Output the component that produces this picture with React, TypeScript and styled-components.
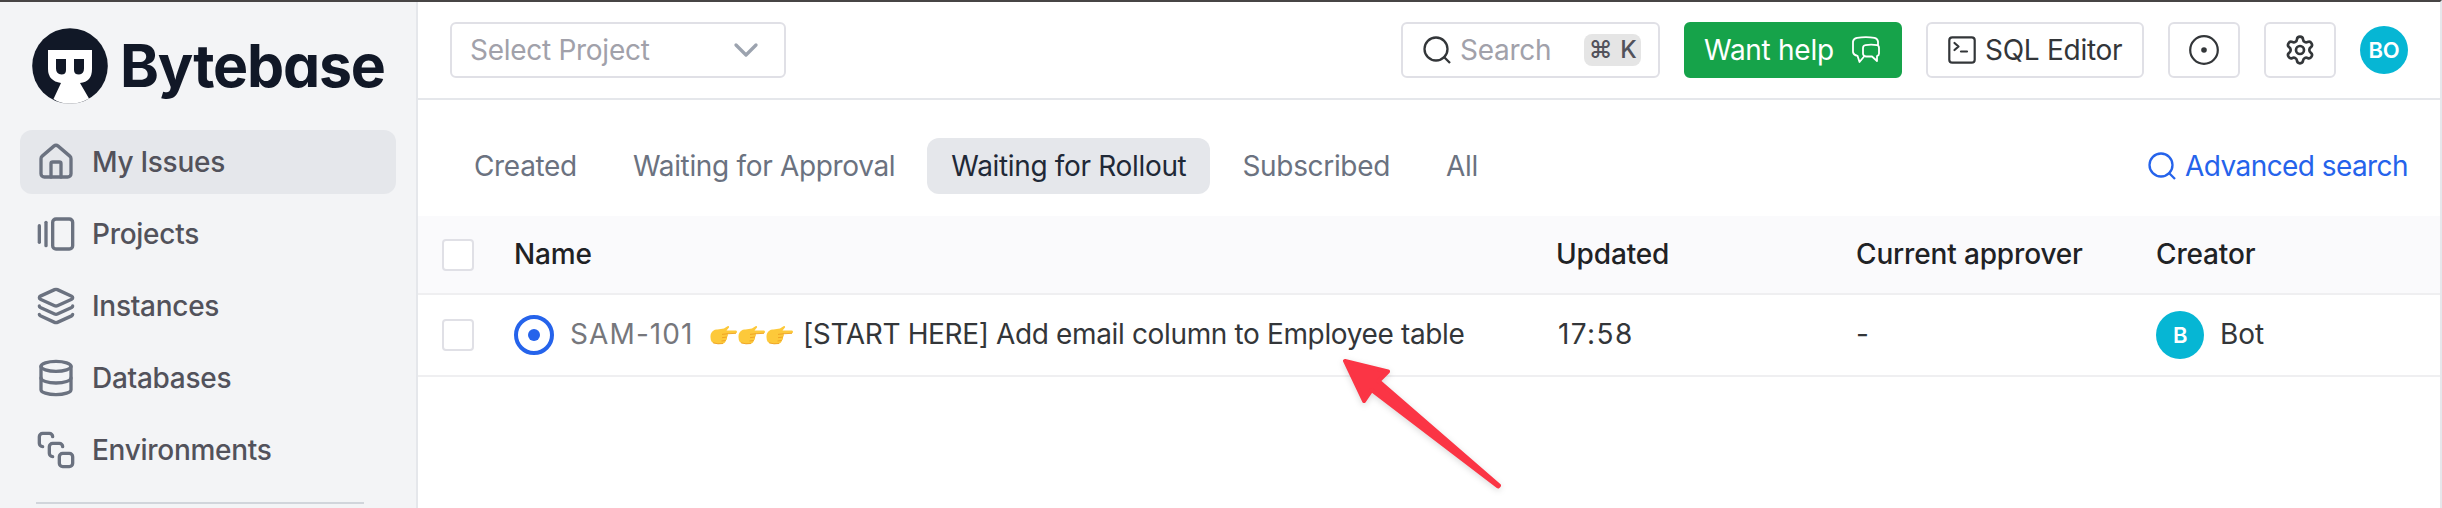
import React from "react";
import styled, { createGlobalStyle } from "styled-components";
import {
  Home,
  GalleryHorizontalEnd,
  Layers,
  Database,
  SquareStack,
  ChevronDown,
  Settings,
  type LucideIcon,
} from "lucide-react";

const GlobalStyle = createGlobalStyle`
  *, *::before, *::after { box-sizing: border-box; }
  body {
    margin: 0;
    background: #fff;
    font-family: Inter, "Liberation Sans", sans-serif;
    font-size: 28px;
    line-height: 40px;
    letter-spacing: -0.28px;
    color: #333639;
  }
`;

const Page = styled.div`
  display: flex;
  width: 2442px;
  height: 508px;
  overflow: hidden;
  border-top: 2px solid #474545;
  border-right: 2px solid #e5e7eb;
`;

const Sidebar = styled.aside`
  flex: none;
  width: 418px;
  padding: 26px 20px 0;
  background: #f3f4f6;
  border-right: 2px solid #e5e7eb;
`;

const Brand = styled.div`
  display: flex;
  align-items: center;
  height: 76px;
  padding-left: 12px;
  margin-bottom: 26px;
  color: #111827;
`;

const BrandName = styled.span`
  margin-left: 12px;
  font-weight: 700;
  font-size: 59px;
  line-height: 76px;
  letter-spacing: -1.2px;
  font-feature-settings: "cv11";
`;

const NavItem = styled.a<{ $active?: boolean }>`
  display: flex;
  align-items: center;
  gap: 16px;
  height: 64px;
  margin-bottom: 8px;
  padding: 0 16px;
  border-radius: 12px;
  font-weight: 500;
  color: #52525b;
  background: ${(p) => (p.$active ? "#e5e7eb" : "transparent")};
  svg { color: #6b7280; flex: none; }
`;

const SidebarRule = styled.hr`
  margin: 20px 32px 0 16px;
  border: 0;
  height: 2px;
  background: #d1d5db;
`;

const Main = styled.main`
  display: flex;
  flex-direction: column;
  flex: 1;
  min-width: 0;
`;

const Header = styled.header`
  display: flex;
  align-items: center;
  gap: 24px;
  height: 98px;
  padding: 0 32px;
  border-bottom: 2px solid #e5e7eb;
`;

const Spacer = styled.div`
  flex: 1;
`;

const Control = styled.div<{ $width: number; $pad?: string }>`
  display: flex;
  align-items: center;
  gap: 9px;
  flex: none;
  width: ${(p) => p.$width}px;
  height: 56px;
  padding: ${(p) => p.$pad ?? "0 20px"};
  border: 2px solid #e0e0e6;
  border-radius: 6px;
  white-space: nowrap;
  svg { flex: none; }
`;

const HelpButton = styled(Control)`
  justify-content: space-between;
  border-color: #16a34a;
  background: #16a34a;
  color: #fff;
`;

const IconButton = styled(Control)`
  justify-content: center;
`;

const Placeholder = styled.span`
  flex: 1;
  color: #a1a1aa;
`;

const Shortcut = styled.kbd`
  display: flex;
  align-items: center;
  justify-content: center;
  gap: 8px;
  width: 57px;
  height: 32px;
  border-radius: 8px;
  background: #e5e5e5;
  color: #52525b;
  font: 500 24px/32px Inter, sans-serif;
`;

const Avatar = styled.span`
  display: flex;
  align-items: center;
  justify-content: center;
  flex: none;
  width: 48px;
  height: 48px;
  border-radius: 50%;
  background: #06b6d4;
  color: #fff;
  font-weight: 600;
  font-size: 22px;
`;

const TabBar = styled.nav`
  display: flex;
  align-items: center;
  height: 116px;
  padding: 16px 32px 0;
`;

const Tab = styled.a<{ $active?: boolean }>`
  height: 56px;
  margin-right: 8px;
  padding: 0 24px;
  border-radius: 12px;
  line-height: 56px;
  letter-spacing: -0.33px;
  white-space: nowrap;
  color: ${(p) => (p.$active ? "#1f2937" : "#6b7280")};
  background: ${(p) => (p.$active ? "#e5e7eb" : "transparent")};
`;

const SearchLink = styled.a`
  display: flex;
  align-items: center;
  gap: 9px;
  letter-spacing: -0.57px;
  color: #2563eb;
`;

const TableRow = styled.div<{ $head?: boolean }>`
  display: grid;
  grid-template-columns: 96px 1042px 300px 300px 1fr;
  align-items: center;
  height: ${(p) => (p.$head ? 79 : 82)}px;
  border-bottom: 2px solid #efeff1;
  background: ${(p) => (p.$head ? "#fafafc" : "#fff")};
  color: ${(p) => (p.$head ? "#1f2225" : "#333639")};
  font-weight: ${(p) => (p.$head ? 500 : 400)};
  letter-spacing: ${(p) => (p.$head ? -0.15 : -0.36)}px;
  line-height: 38px;
`;

const Cell = styled.div`
  display: flex;
  align-items: center;
  white-space: nowrap;
`;

const CellText = styled.span`
  padding-bottom: 2px;
`;

const Checkbox = styled.span`
  width: 32px;
  height: 32px;
  margin-left: 24px;
  border: 2px solid #e0e0e6;
  border-radius: 4px;
  background: #fff;
`;

const StatusDot = styled.span`
  display: flex;
  align-items: center;
  justify-content: center;
  width: 40px;
  height: 40px;
  margin-right: 16px;
  border: 4px solid #2563eb;
  border-radius: 50%;
  &::after {
    content: "";
    width: 12px;
    height: 12px;
    border-radius: 50%;
    background: #2563eb;
  }
`;

const IssueKey = styled(CellText)`
  width: 140px;
  letter-spacing: 1.1px;
  color: #76777c;
`;

const Timestamp = styled(CellText)`
  padding-left: 2px;
  letter-spacing: 1.4px;
`;

const Hands = styled.span`
  display: flex;
  margin-right: 9px;
`;

const CreatorName = styled(CellText)`
  margin-left: 16px;
  letter-spacing: 0;
`;

const Pointer = styled.svg`
  position: absolute;
  left: 1330px;
  top: 350px;
  filter: drop-shadow(0 2px 3px rgba(0, 0, 0, 0.15));
`;

const BytebaseMark = () => (
  <svg width="76" height="76" viewBox="0 0 76 76">
    <circle cx="38" cy="38" r="37.8" fill="#111827" />
    <path
      fill="#fff"
      d="M16 22H60V41Q60 54 48 55L57 70.5Q48 75.8 38 75.8T21.500 71L29 55Q16 53 16 41Z"
    />
    <path
      fill="#111827"
      d="M24 31H34V42Q34 46.500 29.500 46.500Q24 46 24 40.500ZM42 31H52V40.500Q52 46 47 46.500Q42 46.500 42 42Z"
    />
  </svg>
);

const HelpIcon = () => (
  <svg width="28" height="28" viewBox="0 0 28 28" fill="none" stroke="currentColor" strokeWidth="1.800" strokeLinejoin="round">
    <path d="M26 9V5.500Q25.500 2.500 22.500 1.800Q14 .6 5 1.800Q1.500 2.500 1 5.500V16Q1.500 19 5.500 19.800L7.500 26L12.500 20" />
    <path d="M13.500 9.200Q19 8.200 25 9.200Q27 9.600 27 12V17.500Q27 19.500 25 20V25L20 20.500H14Q11 20 11 17.500V12Q11 9.600 13.500 9.200Z" />
  </svg>
);

const TerminalIcon = () => (
  <svg width="28" height="28" viewBox="0 0 28 28" fill="none" stroke="currentColor" strokeWidth="2.200" strokeLinecap="round" strokeLinejoin="round">
    <rect x="1.300" y="1.300" width="25.400" height="25.400" rx="3" />
    <path d="M6.500 7L10.500 10.500L6.500 14M13 15.500H19" />
  </svg>
);

const TargetIcon = () => (
  <svg width="32" height="32" viewBox="0 0 32 32">
    <circle cx="16" cy="16" r="13.800" fill="none" stroke="currentColor" strokeWidth="2.200" />
    <circle cx="16" cy="16" r="2.800" fill="currentColor" />
  </svg>
);

const MagnifierIcon = () => (
  <svg width="28" height="28" viewBox="0 0 28 28" fill="none" stroke="currentColor" strokeWidth="2.300">
    <circle cx="13" cy="13" r="11.500" />
    <path d="M20.500 20.500L27 27" />
  </svg>
);

const HandIcon = () => (
  <svg width="28" height="20" viewBox="0 0 28 20">
    <path
      fill="#fdc93a"
      d="M.8 9Q3 4 7.500 4.500L14 3.500L17.500 1.200Q19.500.6 19 2.600L16.500 5.500L26 5.600Q28 6.800 26 8.300L17.500 8.800Q18.500 11 17 12Q17.500 14.500 15.800 15.500Q15.500 18.500 12 18.800Q4.500 19.500 1.800 17Q-.2 14 .8 9Z"
    />
    <path fill="none" stroke="#eda021" strokeWidth="0.900" d="M17.500 8.800L12 9.400M17 12L12 12.700M15.800 15.500L11.500 16M3 17.800Q8 19.500 13 18.500M17 8.800L26 8.300" />
  </svg>
);

const NAV: { label: string; icon: LucideIcon; active?: boolean }[] = [
  { label: "My Issues", icon: Home, active: true },
  { label: "Projects", icon: GalleryHorizontalEnd },
  { label: "Instances", icon: Layers },
  { label: "Databases", icon: Database },
  { label: "Environments", icon: SquareStack },
];

const TABS = ["Created", "Waiting for Approval", "Waiting for Rollout", "Subscribed", "All"];

export default function App() {
  return (
    <>
      <GlobalStyle />
      <Page>
        <Sidebar>
          <Brand>
            <BytebaseMark />
            <BrandName>Bytebase</BrandName>
          </Brand>
          {NAV.map(({ label, icon: Icon, active }) => (
            <NavItem key={label} $active={active}>
              <Icon size={40} />
              {label}
            </NavItem>
          ))}
          <SidebarRule />
        </Sidebar>
        <Main>
          <Header>
            <Control $width={336} $pad="0 18px">
              <Placeholder>Select Project</Placeholder>
              <ChevronDown size={40} color="#9ca3af" />
            </Control>
            <Spacer />
            <Control $width={259} $pad="0 17px 0 20px">
              <MagnifierIcon />
              <Placeholder>Search</Placeholder>
              <Shortcut>
                <span>⌘</span>
                <span>K</span>
              </Shortcut>
            </Control>
            <HelpButton $width={218} $pad="0 20px 0 18px">
              Want help
              <HelpIcon />
            </HelpButton>
            <Control $width={218}>
              <TerminalIcon />
              SQL Editor
            </Control>
            <IconButton $width={72}>
              <TargetIcon />
            </IconButton>
            <IconButton $width={72}>
              <Settings size={32} />
            </IconButton>
            <Avatar>BO</Avatar>
          </Header>
          <TabBar>
            {TABS.map((tab) => (
              <Tab key={tab} $active={tab === "Waiting for Rollout"}>
                {tab}
              </Tab>
            ))}
            <Spacer />
            <SearchLink>
              <MagnifierIcon />
              Advanced search
            </SearchLink>
          </TabBar>
          <TableRow $head>
            <Cell>
              <Checkbox />
            </Cell>
            <Cell>
              <CellText>Name</CellText>
            </Cell>
            <Cell>
              <CellText>Updated</CellText>
            </Cell>
            <Cell>
              <CellText>Current approver</CellText>
            </Cell>
            <Cell>
              <CellText>Creator</CellText>
            </Cell>
          </TableRow>
          <TableRow>
            <Cell>
              <Checkbox />
            </Cell>
            <Cell>
              <StatusDot />
              <IssueKey>SAM-101</IssueKey>
              <Hands>
                <HandIcon />
                <HandIcon />
                <HandIcon />
              </Hands>
              <CellText>[START HERE] Add email column to Employee table</CellText>
            </Cell>
            <Cell>
              <Timestamp>17:58</Timestamp>
            </Cell>
            <Cell>
              <CellText>-</CellText>
            </Cell>
            <Cell>
              <Avatar>B</Avatar>
              <CreatorName>Bot</CreatorName>
            </Cell>
          </TableRow>
        </Main>
      </Page>
      <Pointer width="180" height="150" viewBox="0 0 180 150">
        <path
          fill="#fb3545"
          stroke="#fb3545"
          strokeWidth="4"
          strokeLinejoin="round"
          d="M15 11L58 21.500L48.500 31L169 135.500L168 136.500L41.500 40L34 51Z"
        />
      </Pointer>
    </>
  );
}
